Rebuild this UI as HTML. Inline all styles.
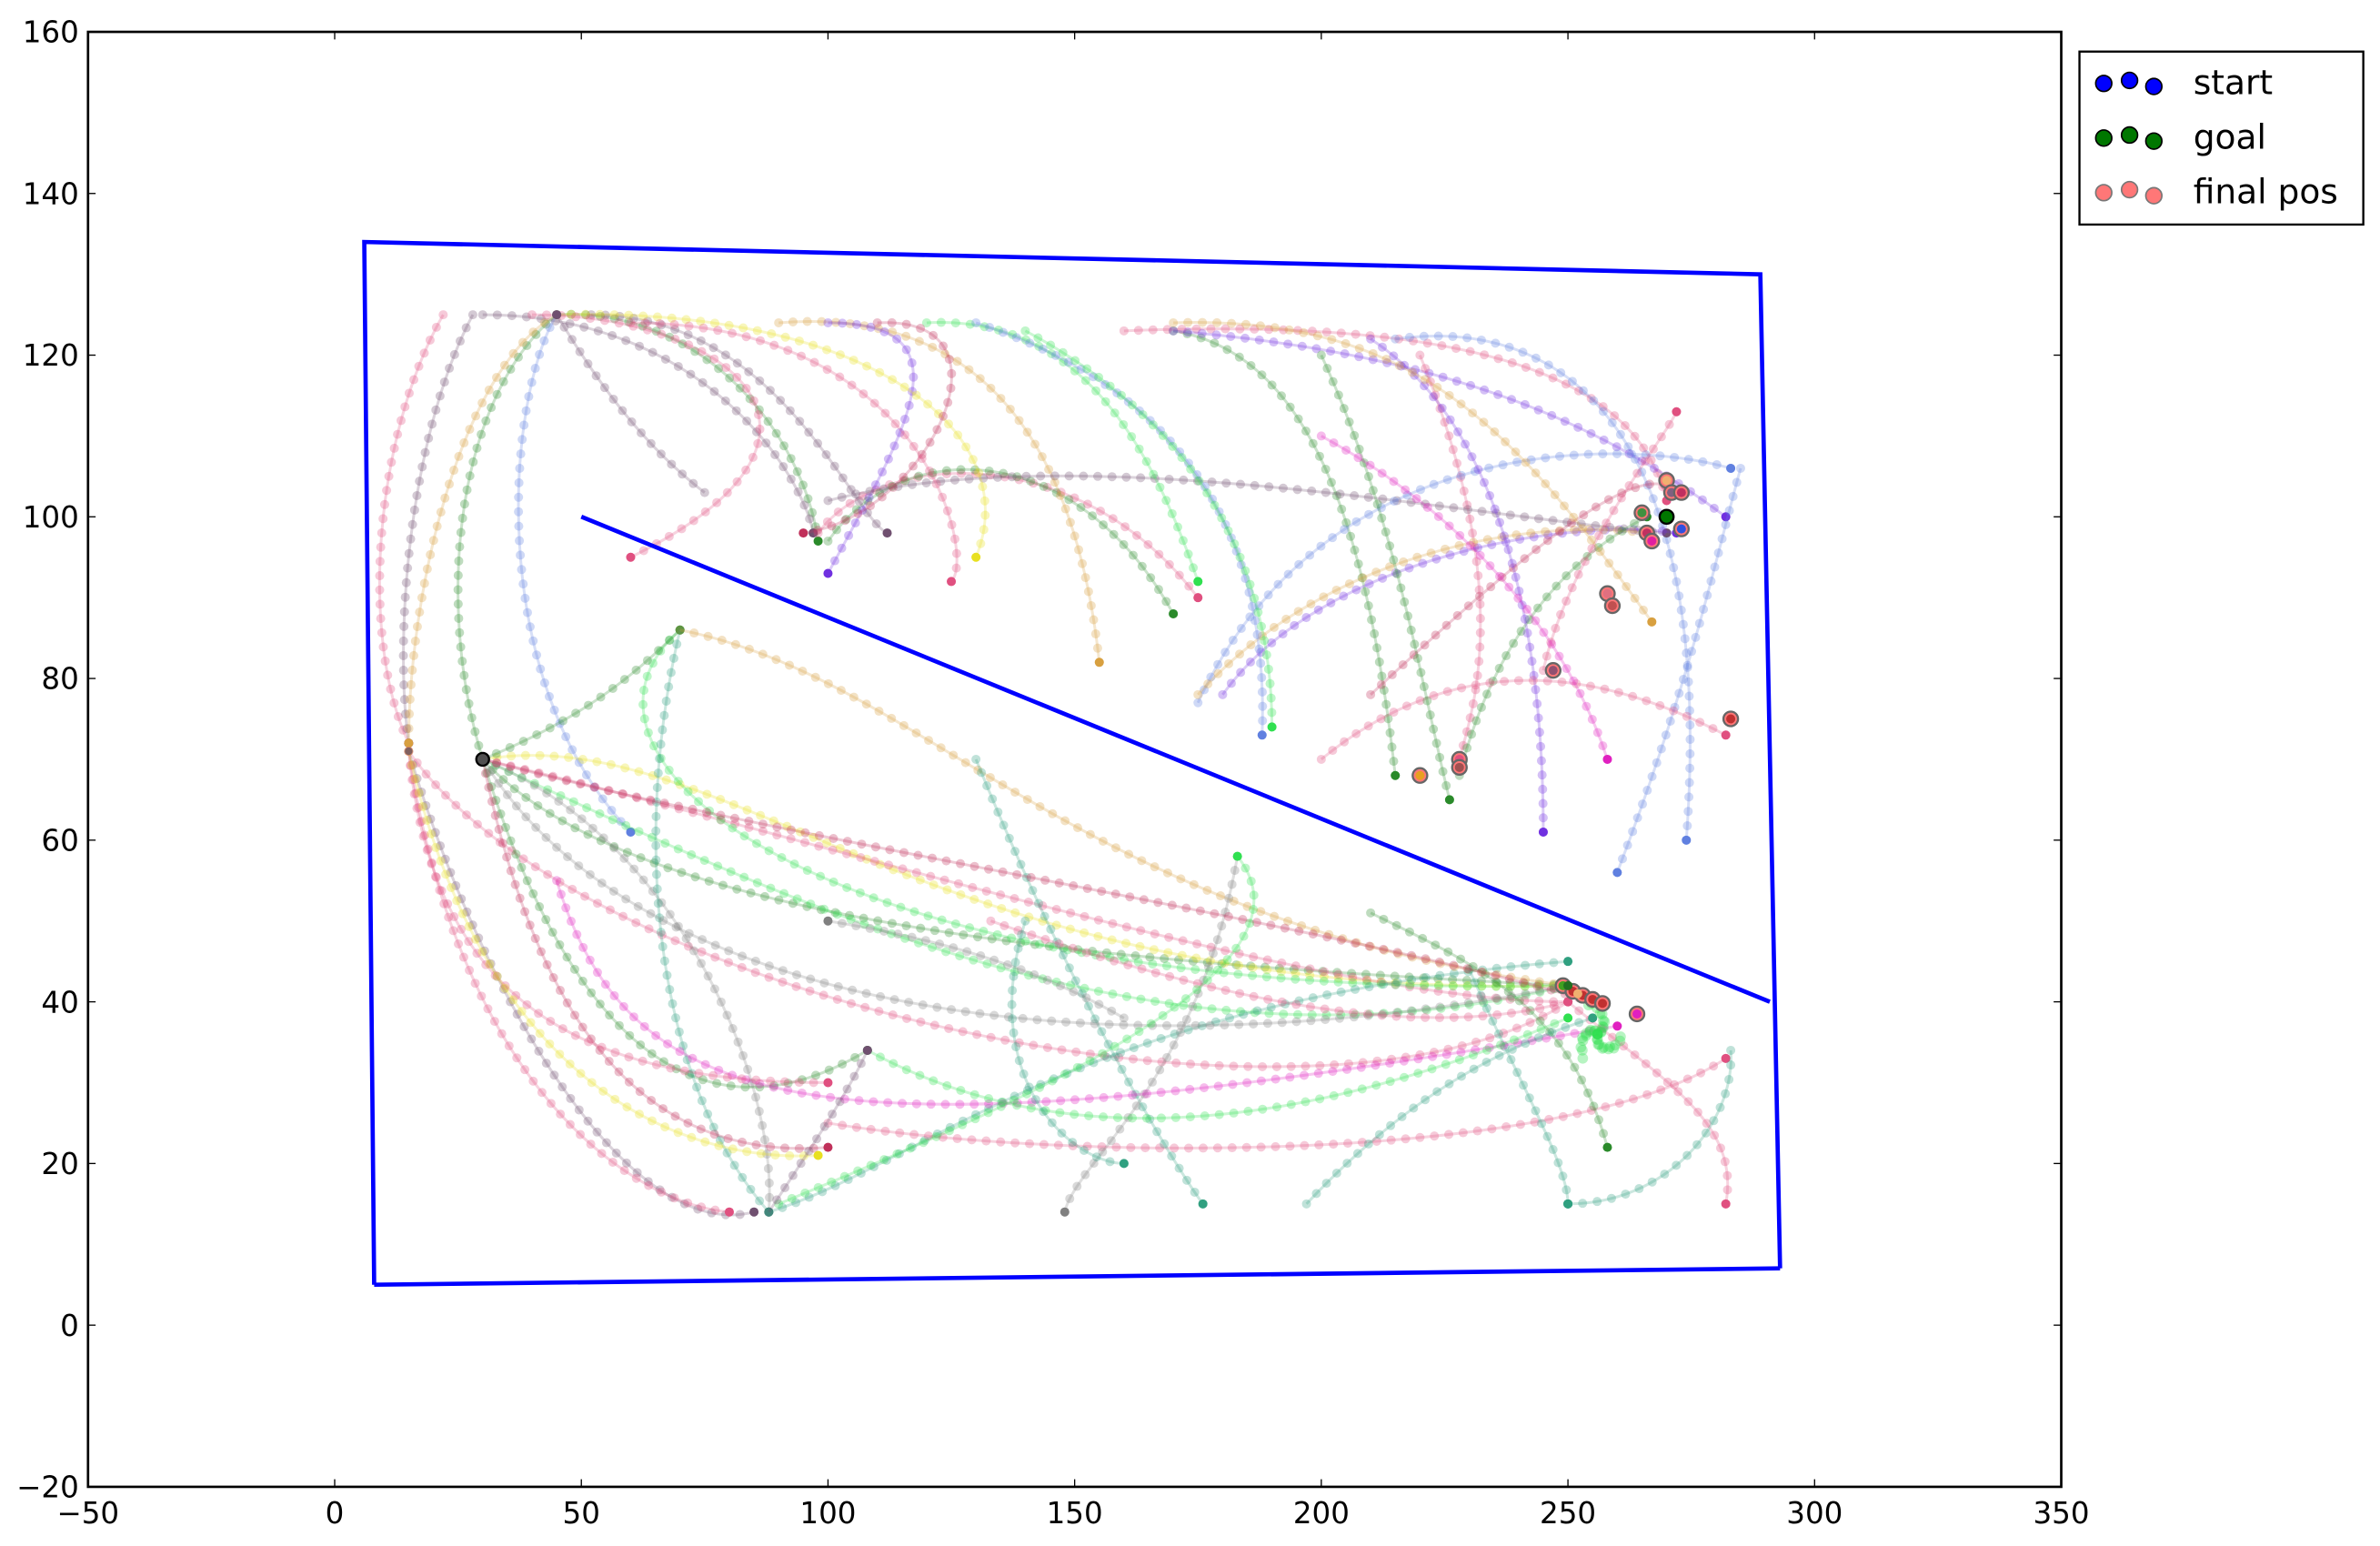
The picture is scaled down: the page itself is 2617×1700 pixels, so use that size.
<!DOCTYPE html>
<html><head><meta charset="utf-8">
<style>
html,body{margin:0;padding:0;background:#fff;}
svg{display:block;}
text{font-family:"DejaVu Sans","Liberation Sans",sans-serif;fill:#000;}
</style></head>
<body>
<svg id="s" width="2617" height="1700" viewBox="0 0 1568 1019" preserveAspectRatio="none" xmlns="http://www.w3.org/2000/svg">
<rect width="1568" height="1019" fill="#fff"/>
<g id="traj"></g>
<g fill="none" stroke="#0000ff" stroke-width="2.8" stroke-linejoin="miter">
<polyline points="246.5,846.8 240,159.5 1159.75,180.8 1172.75,836"/>
<line x1="246.5" y1="846.8" x2="1172.75" y2="836"/>
<line x1="383" y1="340.6" x2="1166" y2="660.3"/>
</g>
<g id="marks"></g>
<rect x="58" y="21" width="1300" height="959" fill="none" stroke="#000" stroke-width="1.6"/>
<g stroke="#000" stroke-width="0.8" id="ticks"></g>
<g font-size="19.5" id="labels"></g>
<rect x="1370" y="34" width="187" height="114" fill="#fff" stroke="#000" stroke-width="1.4"/>
<g stroke="#000" stroke-width="1">
<circle cx="1386" cy="55" r="5.3" fill="#0000ff"/><circle cx="1403" cy="53" r="5.3" fill="#0000ff"/><circle cx="1419" cy="57" r="5.3" fill="#0000ff"/>
<circle cx="1386" cy="91" r="5.3" fill="#007700"/><circle cx="1403" cy="89" r="5.3" fill="#007700"/><circle cx="1419" cy="93" r="5.3" fill="#007700"/>
</g>
<g stroke="#777" stroke-width="1" fill="#f77">
<circle cx="1386" cy="127" r="5.3"/><circle cx="1403" cy="125" r="5.3"/><circle cx="1419" cy="129" r="5.3"/>
</g>
<text x="1445" y="62" font-size="22.5">start</text>
<text x="1445" y="98" font-size="22.5">goal</text>
<text x="1445" y="134" font-size="22.5">final pos</text>
</svg>
<script>
(function(){
var NS="http://www.w3.org/2000/svg";
function X(x){return 58+(x+50)*3.25;}
function Y(y){return 980-(y+20)*5.328;}
var C={g:'#2a8a2a',p:'#e05080',r:'#c0305a',u:'#7030e0',b:'#6080e0',y:'#e8e020',t:'#d8a040',k:'#705070',l:'#30e050',m:'#e020c0',e:'#30a080',w:'#808080'};
var T=[
['g',[45,125],[75,126],[95,110],[98,97]],
['k',[30,125],[75,125],[95,105],[97,98]],
['p',[22,125],[8,110],[5,85],[15,72]],
['k',[28,125],[15,110],[12,85],[15,72]],
['g',[45,125],[25,115],[20,90],[30,70]],
['t',[45,125],[25,118],[15,90],[15,72]],
['b',[45,125],[35,115],[30,80],[60,61]],
['p',[98,98],[110,108],[150,110],[175,90]],
['g',[100,97],[115,110],[150,110],[170,88]],
['k',[52,125],[90,125],[105,100],[112,98]],
['t',[90,124],[130,126],[150,110],[155,82]],
['u',[100,124],[130,124],[115,110],[100,93]],
['g',[170,123],[200,120],[210,95],[215,68]],
['p',[160,123],[240,125],[265,115],[270,102]],
['b',[215,122],[250,125],[280,110],[274,60]],
['u',[170,123],[230,120],[260,110],[282,100]],
['p',[220,120],[240,90],[230,75],[228,70]],
['k',[100,102],[150,110],[230,100],[270,98]],
['u',[180,78],[200,95],[250,100],[272,98]],
['b',[175,77],[200,110],[260,110],[283,106]],
['t',[175,78],[200,95],[240,100],[266,98]],
['r',[210,78],[240,95],[265,108],[272,103]],
['g',[228,68],[235,85],[250,95],[266,100]],
['p',[245,81],[250,95],[270,110],[272,113]],
['y',[45,125],[110,126],[140,110],[130,95]],
['l',[120,124],[150,125],[165,110],[175,92]],
['p',[40,125],[80,125],[110,110],[60,95]],
['u',[210,122],[240,110],[245,80],[245,61]],
['r',[110,124],[140,125],[120,100],[95,98]],
['b',[285,106],[280,95],[275,80],[260,56]],
['p',[200,70],[230,85],[260,80],[282,73]],
['g',[200,120],[215,100],[220,80],[226,65]],
['t',[170,124],[220,125],[240,110],[267,87]],
['b',[130,124],[160,118],[190,105],[188,73]],
['l',[140,123],[180,110],[190,90],[190,74]],
['p',[60,124],[120,124],[130,95],[125,92]],
['k',[75,103],[60,110],[50,120],[45,125]],
['m',[200,110],[230,100],[250,85],[258,70]],
['g',[30,70],[60,50],[150,45],[250,42]],
['p',[15,71],[50,40],[200,20],[250,40]],
['k',[15,71],[30,40],[60,10],[85,14]],
['p',[15,71],[25,30],[60,15],[80,14]],
['y',[30,70],[80,75],[120,40],[250,42]],
['l',[30,70],[100,50],[170,30],[250,42]],
['p',[30,70],[100,60],[200,40],[250,40]],
['w',[30,70],[70,60],[90,30],[88,14]],
['g',[30,70],[45,40],[70,20],[108,34]],
['l',[70,86],[40,70],[100,40],[250,42]],
['g',[30,70],[50,75],[60,80],[70,86]],
['e',[70,86],[60,60],[65,30],[88,14]],
['e',[88,14],[120,20],[150,40],[250,45]],
['t',[70,86],[120,80],[150,50],[250,42]],
['r',[30,70],[40,40],[60,20],[100,22]],
['p',[100,25],[150,20],[250,20],[282,33]],
['p',[250,40],[270,30],[285,25],[282,15]],
['e',[130,70],[150,40],[170,20],[176,15]],
['w',[183,58],[175,30],[150,20],[148,14]],
['g',[210,51],[230,45],[250,40],[258,22]],
['e',[230,44],[240,30],[250,20],[250,15]],
['m',[45,55],[60,25],[100,20],[260,37]],
['l',[108,34],[150,20],[200,25],[250,38]],
['e',[197,15],[220,30],[240,35],[255,38]],
['p',[15,71],[20,40],[50,30],[100,30]],
['w',[30,70],[60,40],[150,30],[250,42]],
['e',[283,34],[284,25],[270,15],[250,15]],
['y',[15,71],[30,30],[70,20],[98,21]],
['r',[30,70],[90,60],[200,50],[255,40]],
['p',[133,50],[180,40],[220,35],[250,40]],
['l',[90,15],[150,30],[200,45],[183,58]],
['k',[88,14],[100,25],[105,30],[108,34]],
['e',[140,50],[130,30],[150,20],[160,20]],
['w',[160,38],[140,45],[120,48],[100,50]]
];
var tg=document.getElementById('traj');
T.forEach(function(t){
 var c=C[t[0]];
 var d='M'+X(t[1][0])+','+Y(t[1][1])+' C'+[t[2],t[3],t[4]].map(function(p){return X(p[0])+','+Y(p[1]);}).join(' ');
 var p=document.createElementNS(NS,'path');
 p.setAttribute('d',d);p.setAttribute('fill','none');p.setAttribute('stroke',c);
 p.setAttribute('stroke-width','1.8');p.setAttribute('stroke-opacity','0.25');
 tg.appendChild(p);
 var L=p.getTotalLength(),n=Math.max(2,Math.round(L/9.5));
 for(var i=0;i<=n;i++){var q=p.getPointAtLength(L*i/n);
  var ci=document.createElementNS(NS,'circle');ci.setAttribute('cx',q.x);ci.setAttribute('cy',q.y);
  ci.setAttribute('r','3');ci.setAttribute('fill',c);ci.setAttribute('fill-opacity','0.3');tg.appendChild(ci);}
 var e=document.createElementNS(NS,'circle');e.setAttribute('cx',X(t[4][0]));e.setAttribute('cy',Y(t[4][1]));
 e.setAttribute('r','3');e.setAttribute('fill',c);tg.appendChild(e);
});
for(var i=0;i<40;i++){var a=i*2.4,r=(i%7)*1.3;
 var ci=document.createElementNS(NS,'circle');ci.setAttribute('cx',X(256+Math.cos(a)*r*0.6));ci.setAttribute('cy',Y(36+Math.sin(a)*r*0.5));
 ci.setAttribute('r','3.5');ci.setAttribute('fill','#30e050');ci.setAttribute('fill-opacity','0.35');tg.appendChild(ci);}
var mg=document.getElementById('marks');
function mk(x,y,fill,stroke,r){var ci=document.createElementNS(NS,'circle');ci.setAttribute('cx',X(x));ci.setAttribute('cy',Y(y));
 ci.setAttribute('r',r||4.5);ci.setAttribute('fill',fill);ci.setAttribute('stroke',stroke);ci.setAttribute('stroke-width','1.4');mg.appendChild(ci);}
var F=[[270,104.5,'#f0b070'],[271,103,'#806080'],[273,103,'#c03060'],[265,100.5,'#409040'],[266,98,'#c03060'],[267,97,'#e020a0'],[273,98.5,'#3050e0'],[258,90.5,'#e07080'],[259,89,'#c05050'],[247,81,'#905070'],[283,75,'#c03030'],[228,70,'#e05080'],[228,69,'#a05050'],[220,68,'#e8a020'],[249,42,'#40a020'],[251,41.3,'#c03030'],[253,40.8,'#c03030'],[255,40.3,'#c03030'],[257,39.8,'#c03030'],[264,38.5,'#e020c0']];
F.forEach(function(f){mk(f[0],f[1],'#ff7777','#666',4.8);mk(f[0],f[1],f[2],'none',3);});
mk(252,41,'#f0b070','none',3);mk(250,42,'#207020','none',3);
mk(270,100,'#007700','#000',4.6);
mk(30,70,'#505050','#000',4.2);mk(15,71,'#806060','none',2.5);
var tk=document.getElementById('ticks'),lb=document.getElementById('labels');
function ln(x1,y1,x2,y2){var l=document.createElementNS(NS,'line');l.setAttribute('x1',x1);l.setAttribute('y1',y1);l.setAttribute('x2',x2);l.setAttribute('y2',y2);tk.appendChild(l);}
function tx(x,y,s,a){var t=document.createElementNS(NS,'text');t.setAttribute('x',x);t.setAttribute('y',y);t.setAttribute('text-anchor',a);t.textContent=s;lb.appendChild(t);}
for(var v=-50;v<=350;v+=50){var x=X(v);ln(x,980,x,975);ln(x,21,x,26);tx(x,1004,(v<0?'\u2212':'')+Math.abs(v),'middle');}
for(var v=-20;v<=160;v+=20){var y=Y(v);ln(58,y,63,y);ln(1358,y,1353,y);tx(52,y+7,(v<0?'\u2212':'')+Math.abs(v),'end');}
})();
</script>
</body></html>
